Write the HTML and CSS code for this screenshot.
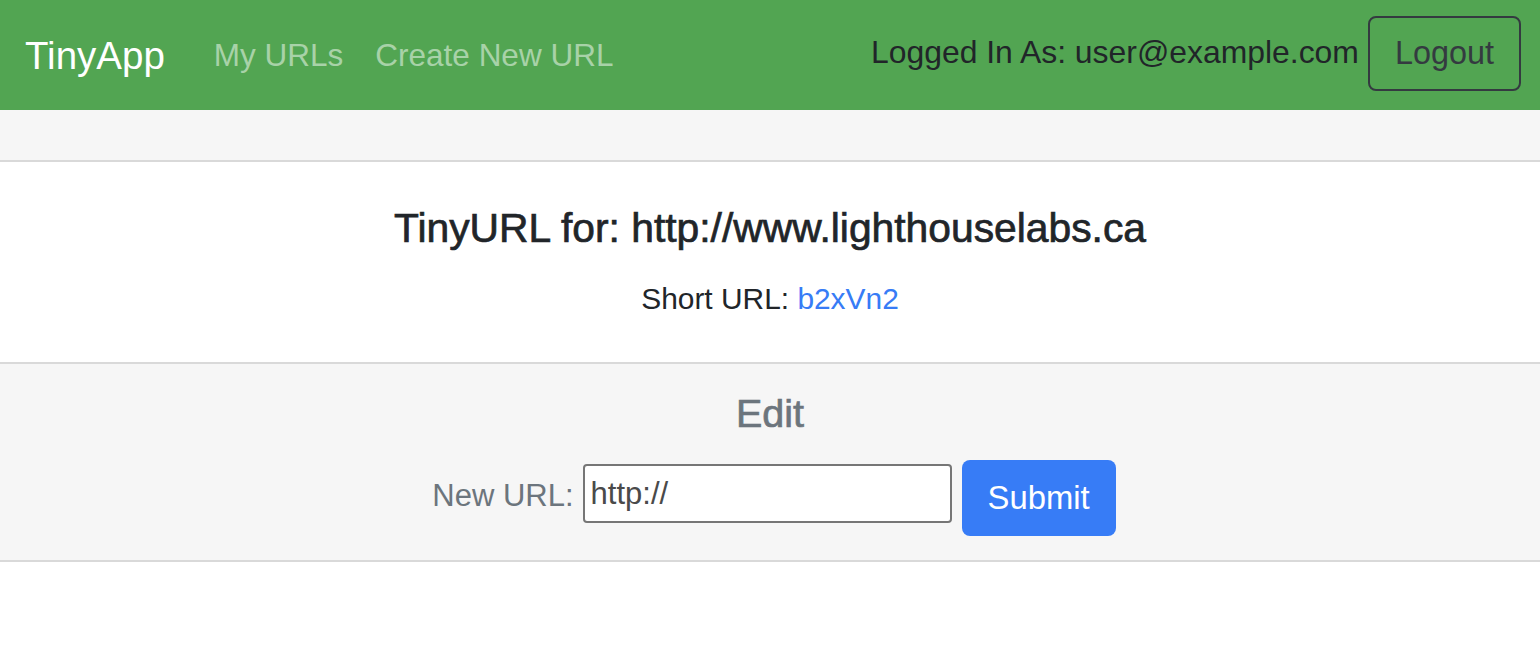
FILE: index.html
```html
<!DOCTYPE html>
<html lang="en">
<head>
<meta charset="utf-8">
<title>TinyApp</title>
<link rel="stylesheet" href="styles.css">
</head>
<body>
<nav class="navbar">
  <a class="brand" href="#">TinyApp</a>
  <div class="nav-links">
    <a class="nav-link" href="#">My URLs</a>
    <a class="nav-link" href="#">Create New URL</a>
  </div>
  <div class="nav-right">
    <span class="logged">Logged In As: user@example.com</span>
    <button class="btn-logout" type="button">Logout</button>
  </div>
</nav>
<main class="card">
  <div class="card-header"></div>
  <div class="card-body">
    <h5 class="card-title">TinyURL for: http://www.lighthouselabs.ca</h5>
    <p class="card-text">Short URL: <a class="short-link" href="#">b2xVn2</a></p>
  </div>
  <div class="card-footer">
    <h5 class="footer-title">Edit</h5>
    <form class="edit-form">
      <label class="edit-label" for="longURL">New URL:</label>
      <input class="edit-input" id="longURL" type="text" value="http://">
      <button class="btn-submit" type="submit">Submit</button>
    </form>
  </div>
</main>
</body>
</html>
```
FILE: styles.css
```css
* { box-sizing: border-box; }
html, body { margin: 0; padding: 0; }
body {
  font-family: "Liberation Sans", Arial, sans-serif;
  color: #212529;
  background: #fff;
  width: 1540px;
  height: 646px;
  overflow: hidden;
}
a { text-decoration: none; }

.navbar {
  display: flex;
  align-items: center;
  height: 110px;
  padding: 0 19px 0 25px;
  background: #52a552;
}
.brand {
  color: #fff;
  font-size: 38.5px;
  line-height: 1;
  margin-top: 2px;
}
.nav-links {
  display: flex;
  gap: 32px;
  margin-left: 49px;
  margin-top: 2px;
}
.nav-link {
  color: #a8d2a8;
  font-size: 31.5px;
  line-height: 1;
}
.nav-right {
  margin-left: auto;
  display: flex;
  align-items: center;
  gap: 9px;
}
.logged {
  font-size: 31.9px;
  color: #212529;
  line-height: 1;
  margin-top: -5px;
}
.btn-logout {
  height: 75px;
  padding: 0 25px;
  border: 2px solid #343a40;
  border-radius: 8px;
  background: transparent;
  color: #343a40;
  font-family: inherit;
  font-size: 32.4px;
  margin-top: -4px;
}

.card-header {
  height: 52px;
  background: #f6f6f6;
  border-bottom: 2px solid #d9d9d9;
}
.card-body {
  height: 202px;
  padding-top: 42px;
  border-bottom: 2px solid #d9d9d9;
  text-align: center;
}
.card-title {
  margin: 0;
  font-size: 40.8px;
  line-height: 48px;
  font-weight: 500;
  color: #212529;
  -webkit-text-stroke: 0.7px #212529;
}
.card-text {
  margin: 29px 0 0;
  font-size: 29.9px;
  line-height: 36px;
}
.short-link { color: #377cf6; }

.card-footer {
  height: 198px;
  padding-top: 25px;
  background: #f6f6f6;
  border-bottom: 2px solid #d9d9d9;
  text-align: center;
}
.footer-title {
  margin: 0;
  font-size: 39.5px;
  line-height: 48px;
  font-weight: 500;
  color: #6c757d;
  -webkit-text-stroke: 0.7px #6c757d;
}
.edit-form {
  display: flex;
  justify-content: center;
  align-items: center;
  margin-top: 23px;
}
.edit-label {
  font-size: 31px;
  color: #6c757d;
  margin-right: 9px;
  margin-left: 8px;
  margin-bottom: 4px;
}
.edit-input {
  width: 369px;
  height: 59px;
  padding: 0 6px;
  border: 2px solid #767676;
  border-radius: 4px;
  background: #fff;
  color: #4a4a4a;
  font-family: inherit;
  font-size: 31px;
  margin-right: 10px;
  margin-bottom: 9px;
}
.btn-submit {
  height: 76px;
  padding: 0 26px;
  border: none;
  border-radius: 8px;
  background: #377cf6;
  color: #fff;
  font-family: inherit;
  font-size: 32.8px;
}
```
